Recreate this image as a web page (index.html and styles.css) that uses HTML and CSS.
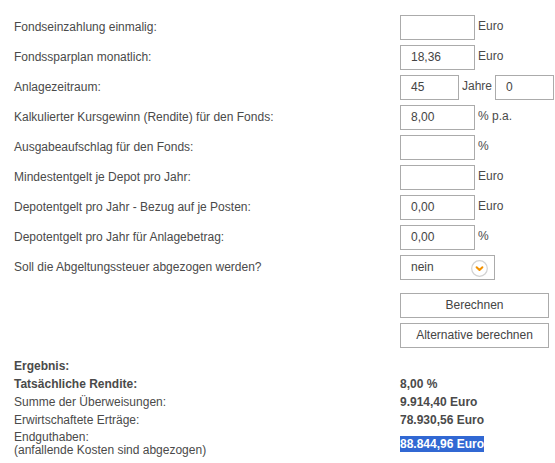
FILE: index.html
```html
<!DOCTYPE html>
<html lang="de">
<head>
<meta charset="utf-8">
<title>Fondsrechner</title>
<link rel="stylesheet" href="styles.css">
</head>
<body>
<div class="calc">
  <div class="row">
    <div class="label">Fondseinzahlung einmalig:</div>
    <div class="field"><span class="input w75"></span><span class="unit">Euro</span></div>
  </div>
  <div class="row">
    <div class="label">Fondssparplan monatlich:</div>
    <div class="field"><span class="input w75">18,36</span><span class="unit">Euro</span></div>
  </div>
  <div class="row">
    <div class="label">Anlagezeitraum:</div>
    <div class="field"><span class="input w59">45</span><span class="unit">Jahre</span><span class="input w59 second">0</span></div>
  </div>
  <div class="row">
    <div class="label">Kalkulierter Kursgewinn (Rendite) für den Fonds:</div>
    <div class="field"><span class="input w75">8,00</span><span class="unit">% p.a.</span></div>
  </div>
  <div class="row">
    <div class="label">Ausgabeaufschlag für den Fonds:</div>
    <div class="field"><span class="input w75"></span><span class="unit">%</span></div>
  </div>
  <div class="row">
    <div class="label">Mindestentgelt je Depot pro Jahr:</div>
    <div class="field"><span class="input w75"></span><span class="unit">Euro</span></div>
  </div>
  <div class="row">
    <div class="label">Depotentgelt pro Jahr - Bezug auf je Posten:</div>
    <div class="field"><span class="input w75">0,00</span><span class="unit">Euro</span></div>
  </div>
  <div class="row">
    <div class="label">Depotentgelt pro Jahr für Anlagebetrag:</div>
    <div class="field"><span class="input w75">0,00</span><span class="unit">%</span></div>
  </div>
  <div class="row">
    <div class="label">Soll die Abgeltungssteuer abgezogen werden?</div>
    <div class="field">
      <span class="select">nein
        <span class="arrow"><svg width="17" height="17" viewBox="0 0 17 17"><circle cx="8.5" cy="8.5" r="7.8" fill="#fff" stroke="#d2d2d2" stroke-width="1.2"/><path d="M5.6 7.2 L8.5 10 L11.4 7.2" fill="none" stroke="#f39200" stroke-width="2" stroke-linecap="round" stroke-linejoin="round"/></svg></span>
      </span>
    </div>
  </div>
  <div class="buttons">
    <div class="button">Berechnen</div>
    <div class="button">Alternative berechnen</div>
  </div>
  <div class="results">
    <div class="res-row"><div class="rlabel bold">Ergebnis:</div><div class="rval"></div></div>
    <div class="res-row"><div class="rlabel bold">Tatsächliche Rendite:</div><div class="rval bold">8,00 %</div></div>
    <div class="res-row"><div class="rlabel">Summe der Überweisungen:</div><div class="rval bold">9.914,40 Euro</div></div>
    <div class="res-row"><div class="rlabel">Erwirtschaftete Erträge:</div><div class="rval bold">78.930,56 Euro</div></div>
    <div class="res-row end"><div class="rlabel">Endguthaben:<br>(anfallende Kosten sind abgezogen)</div><div class="rval bold"><span class="selected">88.844,96 Euro</span></div></div>
  </div>
</div>
</body>
</html>
```

FILE: styles.css
```css
html, body {
  margin: 0;
  padding: 0;
  background: #fff;
}
body {
  font-family: "Liberation Sans", Arial, sans-serif;
  font-size: 12px;
  color: #4a4a4a;
}
.calc {
  padding: 15px 0 0 14px;
}
.row {
  display: flex;
  align-items: center;
  height: 25px;
  margin-bottom: 5px;
}
.label {
  flex: 0 0 386px;
  line-height: 15px;
}
.field {
  display: flex;
  align-items: flex-start;
  flex-shrink: 0;
  height: 25px;
}
.input {
  box-sizing: border-box;
  flex-shrink: 0;
  height: 25px;
  border: 1px solid #ababab;
  padding: 0 10px;
  line-height: 23px;
  color: #444;
  background: #fff;
}
.w75 { width: 75px; }
.w59 { width: 59px; }
.unit {
  padding-left: 3px;
  line-height: 15px;
  padding-top: 4px;
}
.second { margin-left: 3px; }
.select {
  box-sizing: border-box;
  position: relative;
  width: 95px;
  height: 25px;
  border: 1px solid #ababab;
  padding: 0 10px;
  line-height: 23px;
  color: #444;
}
.arrow {
  position: absolute;
  left: 70px;
  top: 4px;
  width: 17px;
  height: 17px;
  line-height: 0;
}
.buttons {
  display: flex;
  flex-direction: column;
  gap: 5px;
  margin: 13px 0 0 386px;
}
.button {
  box-sizing: border-box;
  width: 149px;
  height: 25px;
  border: 1px solid #ababab;
  text-align: center;
  line-height: 23px;
  color: #444;
}
.results {
  margin-top: 9px;
}
.res-row {
  display: flex;
  line-height: 18px;
}
.res-row.end {
  margin-top: 2px;
  line-height: 13px;
}
.rlabel { flex: 0 0 386px; }
.bold { font-weight: bold; }
.rval { flex: 1; }
.end .rval { padding-top: 7px; }
.selected {
  background: #3168d3;
  color: #fff;
  padding: 1px 0;
}
```
